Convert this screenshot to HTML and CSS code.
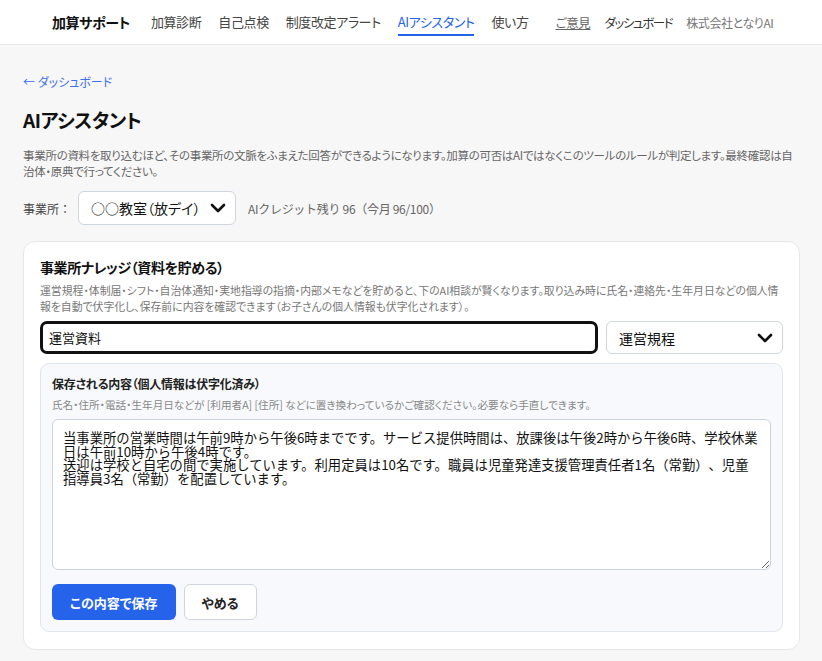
FILE: index.html
```html
<!DOCTYPE html>
<html lang="ja">
<head>
    <meta charset="UTF-8">
    <meta name="viewport" content="width=device-width, initial-scale=1.0">
    <title>AIアシスタント - 加算サポート</title>
    <link rel="stylesheet" href="styles.css">
</head>
<body>

    <!-- ヘッダー -->
    <header class="site-header">
        <div class="header-inner">
            <a class="brand" href="#">加算サポート</a>
            <nav class="main-nav">
                <a href="#">加算診断</a>
                <a href="#">自己点検</a>
                <a href="#">制度改定アラート</a>
                <a href="#" class="active">AIアシスタント</a>
                <a href="#">使い方</a>
            </nav>
            <div class="header-right">
                <a href="#" class="feedback">ご意見</a>
                <a href="#" class="dash-link">ダッシュボード</a>
                <span class="company">株式会社となりAI</span>
            </div>
        </div>
    </header>

    <main class="page">
        <a class="back-link" href="#">← ダッシュボード</a>
        <h1>AIアシスタント</h1>
        <p class="lead">事業所の資料を取り込むほど、その事業所の文脈をふまえた回答ができるようになります。加算の可否はAIではなくこのツールのルールが判定します。最終確認は自治体・原典で行ってください。</p>

        <div class="office-row">
            <label class="office-label">事業所：</label>
            <div class="select-wrap office-select">
                <select>
                    <option>○○教室（放デイ）</option>
                </select>
                <svg class="chevron" viewBox="0 0 16 10" width="16" height="10"><path d="M2 2l6 6 6-6" fill="none" stroke="#111" stroke-width="2.6" stroke-linecap="round" stroke-linejoin="round"/></svg>
            </div>
            <span class="credits">AIクレジット残り 96（今月 96/100）</span>
        </div>

        <!-- ナレッジカード -->
        <section class="card">
            <h2>事業所ナレッジ（資料を貯める）</h2>
            <p class="card-desc">運営規程・体制届・シフト・自治体通知・実地指導の指摘・内部メモなどを貯めると、下のAI相談が賢くなります。取り込み時に氏名・連絡先・生年月日などの個人情報を自動で伏字化し、保存前に内容を確認できます（お子さんの個人情報も伏字化されます）。</p>

            <div class="input-row">
                <input type="text" class="title-input" value="運営資料">
                <div class="select-wrap kind-select">
                    <select>
                        <option>運営規程</option>
                    </select>
                    <svg class="chevron" viewBox="0 0 16 10" width="16" height="10"><path d="M2 2l6 6 6-6" fill="none" stroke="#111" stroke-width="2.6" stroke-linecap="round" stroke-linejoin="round"/></svg>
                </div>
            </div>

            <div class="preview">
                <h3>保存される内容（個人情報は伏字化済み）</h3>
                <p class="hint">氏名・住所・電話・生年月日などが [利用者A] [住所] などに置き換わっているかご確認ください。必要なら手直しできます。</p>
                <textarea class="content-area">当事業所の営業時間は午前9時から午後6時までです。サービス提供時間は、放課後は午後2時から午後6時、学校休業日は午前10時から午後4時です。
送迎は学校と自宅の間で実施しています。利用定員は10名です。職員は児童発達支援管理責任者1名（常勤）、児童指導員3名（常勤）を配置しています。</textarea>
                <div class="actions">
                    <button class="btn btn-primary">この内容で保存</button>
                    <button class="btn btn-secondary">やめる</button>
                </div>
            </div>
        </section>
    </main>

</body>
</html>
```

FILE: styles.css
```css
* {
    box-sizing: border-box;
}

body {
    margin: 0;
    font-family: "Noto Sans CJK JP", "Noto Sans", sans-serif;
    font-feature-settings: "palt";
    background-color: #f7f7f7;
    color: #1f2328;
}

a {
    text-decoration: none;
    color: inherit;
}

/* ヘッダー */
.site-header {
    background-color: #fff;
    border-bottom: 1px solid #e8e8ec;
    height: 45px;
}

.header-inner {
    display: flex;
    align-items: center;
    height: 44px;
    padding: 0 0 0 52px;
    white-space: nowrap;
}

.brand {
    font-size: 14px;
    font-weight: 700;
    letter-spacing: -0.4px;
    color: #111;
    margin-right: 21px;
}

.main-nav {
    display: flex;
    gap: 17px;
    font-size: 13px;
    letter-spacing: -0.4px;
    color: #444;
}

.main-nav a {
    padding: 4px 0 3px;
    border-bottom: 2px solid transparent;
}

.main-nav a.active {
    color: #2563eb;
    border-bottom-color: #2563eb;
}

.header-right {
    display: flex;
    align-items: center;
    gap: 14px;
    margin-left: 27px;
    font-size: 12.5px;
    letter-spacing: -0.4px;
    color: #333;
}

.header-right .feedback {
    color: #666;
    text-decoration: underline;
}

.header-right .dash-link {
    letter-spacing: -1.4px;
}

.header-right .company {
    font-size: 12px;
    color: #777;
}

/* ページ本体 */
.page {
    padding: 23px 22px 0 23px;
}

.back-link {
    display: inline-block;
    font-size: 12px;
    color: #3b6ff0;
}

h1 {
    font-size: 19px;
    font-weight: 700;
    letter-spacing: -0.4px;
    margin: 14px 0 14px;
    color: #111;
}

.lead {
    font-size: 11.5px;
    letter-spacing: -0.3px;
    line-height: 16px;
    color: #666;
    margin: 0 0 12px;
}

.office-row {
    display: flex;
    align-items: center;
    gap: 7px;
}

.office-label {
    font-size: 12px;
    font-feature-settings: normal;
    color: #444;
}

.select-wrap {
    position: relative;
}

.select-wrap select {
    appearance: none;
    -webkit-appearance: none;
    width: 100%;
    height: 100%;
    border: 1px solid #cfd6e0;
    border-radius: 6px;
    background-color: #fff;
    font-family: inherit;
    font-feature-settings: "palt";
    font-size: 14px;
    color: #111;
    padding: 0 12px;
}

.select-wrap .chevron {
    position: absolute;
    right: 10px;
    top: 50%;
    margin-top: -5px;
    pointer-events: none;
}

.office-select {
    width: 158px;
    height: 34px;
}

.credits {
    font-size: 12px;
    font-feature-settings: normal;
    letter-spacing: -0.3px;
    color: #666;
    margin-left: 5px;
}

/* カード */
.card {
    margin-top: 16px;
    background-color: #fff;
    border: 1px solid #e6e7ea;
    border-radius: 12px;
    padding: 15px 16px 17px 16px;
}

.card h2 {
    font-size: 14px;
    font-weight: 700;
    letter-spacing: -0.4px;
    margin: 0 0 5px;
    color: #111;
}

.card-desc {
    font-size: 10.85px;
    line-height: 16px;
    color: #777;
    margin: 0 0 7px;
}

.input-row {
    display: flex;
    gap: 8px;
}

.title-input {
    flex: 1;
    height: 33px;
    border: 3px solid #111;
    border-radius: 7px;
    font-family: inherit;
    font-feature-settings: "palt";
    font-size: 13px;
    padding: 0 6px;
    outline: none;
    color: #111;
}

.kind-select {
    width: 177px;
    height: 33px;
}

.preview {
    margin-top: 9px;
    background-color: #f7f9fc;
    border: 1px solid #e0e6ee;
    border-radius: 9px;
    padding: 11px 11px 11px 11px;
}

.preview h3 {
    font-size: 12px;
    font-weight: 700;
    letter-spacing: -0.25px;
    margin: 0 0 5px;
    color: #222;
}

.hint {
    font-size: 10.6px;
    color: #888;
    margin: 0 0 7px;
}

.content-area {
    display: block;
    width: 100%;
    height: 151px;
    border: 1px solid #cbd3df;
    border-radius: 6px;
    background-color: #fff;
    font-family: inherit;
    font-feature-settings: normal;
    text-spacing-trim: space-all;
    font-size: 13.333px;
    line-height: 13.5px;
    color: #111;
    padding: 11px 12px 11px 10px;
    resize: vertical;
}

.actions {
    display: flex;
    gap: 8px;
    margin-top: 14px;
}

.btn {
    height: 36px;
    border-radius: 6px;
    font-family: inherit;
    font-feature-settings: "palt";
    font-size: 13px;
    font-weight: 700;
    cursor: pointer;
}

.btn-primary {
    background-color: #2563eb;
    border: none;
    color: #fff;
    padding: 0 18px;
}

.btn-secondary {
    background-color: #fff;
    border: 1px solid #cfd4dc;
    color: #222;
    padding: 0 17px;
}
```
